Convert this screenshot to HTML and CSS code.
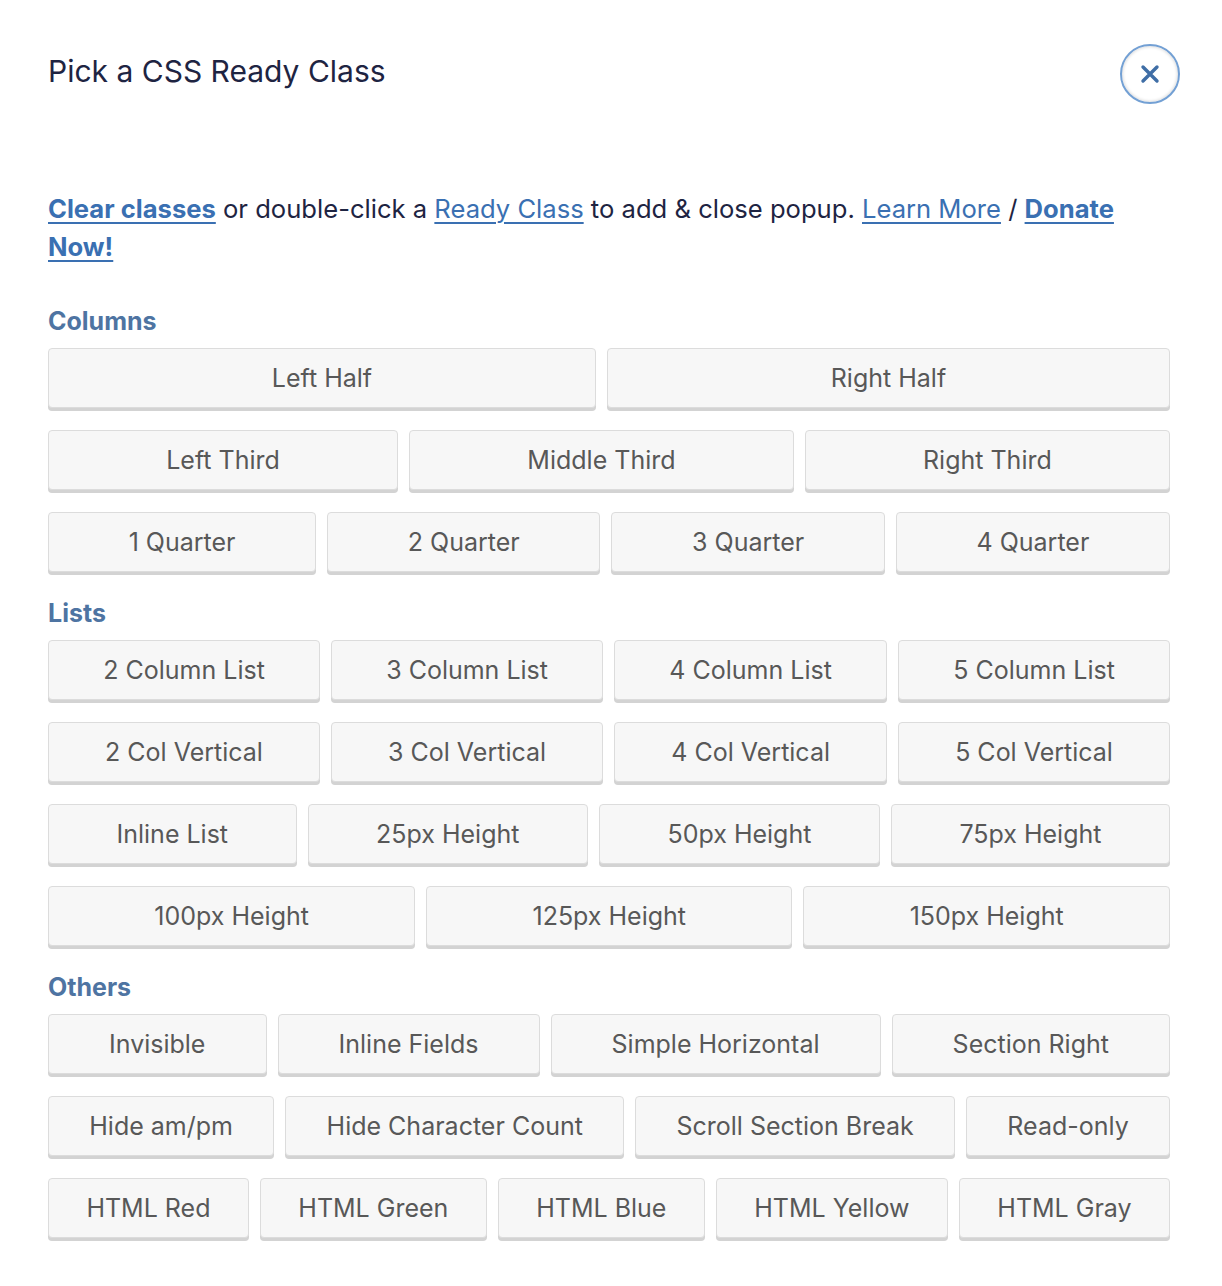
FILE: index.html
```html
<!DOCTYPE html>
<html>
<head>
<meta charset="utf-8">
<title>Pick a CSS Ready Class</title>
<link rel="stylesheet" href="styles.css">
</head>
<body>
<div class="modal">
  <div class="header">
    <h1 class="title">Pick a CSS Ready Class</h1>
    <button class="close" aria-label="Close">
      <svg viewBox="0 0 24 24" width="24" height="24"><path d="M5 5 L19 19 M19 5 L5 19" stroke="#3f6ea6" stroke-width="3.4" stroke-linecap="round" fill="none"/></svg>
    </button>
  </div>
  <p class="intro"><a href="#" class="strong">Clear classes</a> or double-click a <a href="#">Ready Class</a> to add &amp; close popup. <a href="#">Learn More</a> / <a href="#" class="strong">Donate</a> <a href="#" class="strong">Now!</a></p>

  <h2 class="section">Columns</h2>
  <div class="row"><button class="btn">Left Half</button><button class="btn">Right Half</button></div>
  <div class="row"><button class="btn">Left Third</button><button class="btn">Middle Third</button><button class="btn">Right Third</button></div>
  <div class="row"><button class="btn">1 Quarter</button><button class="btn">2 Quarter</button><button class="btn">3 Quarter</button><button class="btn">4 Quarter</button></div>

  <h2 class="section">Lists</h2>
  <div class="row"><button class="btn">2 Column List</button><button class="btn">3 Column List</button><button class="btn">4 Column List</button><button class="btn">5 Column List</button></div>
  <div class="row"><button class="btn">2 Col Vertical</button><button class="btn">3 Col Vertical</button><button class="btn">4 Col Vertical</button><button class="btn">5 Col Vertical</button></div>
  <div class="row"><button class="btn">Inline List</button><button class="btn">25px Height</button><button class="btn">50px Height</button><button class="btn">75px Height</button></div>
  <div class="row"><button class="btn">100px Height</button><button class="btn">125px Height</button><button class="btn">150px Height</button></div>

  <h2 class="section">Others</h2>
  <div class="row"><button class="btn">Invisible</button><button class="btn">Inline Fields</button><button class="btn">Simple Horizontal</button><button class="btn">Section Right</button></div>
  <div class="row"><button class="btn">Hide am/pm</button><button class="btn">Hide Character Count</button><button class="btn">Scroll Section Break</button><button class="btn">Read-only</button></div>
  <div class="row"><button class="btn">HTML Red</button><button class="btn">HTML Green</button><button class="btn">HTML Blue</button><button class="btn">HTML Yellow</button><button class="btn">HTML Gray</button></div>
</div>
</body>
</html>
```
FILE: styles.css
```css
html, body {
  margin: 0;
  padding: 0;
  background: #ffffff;
}

.modal {
  padding: 44px 52px 20px 48px;
  font-family: Inter, "Noto Sans", sans-serif;
  color: #1e2442;
}

.header {
  display: flex;
  justify-content: space-between;
  align-items: flex-start;
  margin-right: -10px;
}

.title {
  margin: 7px 0 0 0;
  font-size: 30px;
  line-height: 40px;
  font-weight: 400;
  color: #1e2442;
}

.close {
  width: 60px;
  height: 60px;
  border-radius: 50%;
  border: 2px solid #73a0d4;
  background: #ffffff;
  box-shadow: inset 0 0 3px 1px rgba(0, 0, 0, 0.13);
  display: flex;
  align-items: center;
  justify-content: center;
  padding: 0;
  cursor: pointer;
}

.intro {
  margin: 86px 0 36px 0;
  font-size: 25.6px;
  line-height: 38px;
}

.intro a {
  color: #3a70b2;
  text-decoration: underline;
  text-underline-offset: 4px;
  text-decoration-thickness: 2px;
}

.intro a.strong {
  font-weight: 700;
}

.section {
  margin: 0 0 8px 0;
  font-family: Inter, "Noto Sans", sans-serif;
  font-size: 25px;
  line-height: 38px;
  font-weight: 700;
  color: #4e74a2;
}

.row {
  display: flex;
  gap: 11px;
  margin-bottom: 22px;
}

.btn {
  flex: 1 1 auto;
  height: 60px;
  padding: 0 20px;
  background: #f7f7f7;
  border: 1px solid #dcdcdc;
  border-radius: 4px;
  box-shadow: 0 3px 0 #d3d3d3;
  font-family: Inter, "Noto Sans", sans-serif;
  font-size: 25px;
  color: #585858;
  cursor: pointer;
}
```
